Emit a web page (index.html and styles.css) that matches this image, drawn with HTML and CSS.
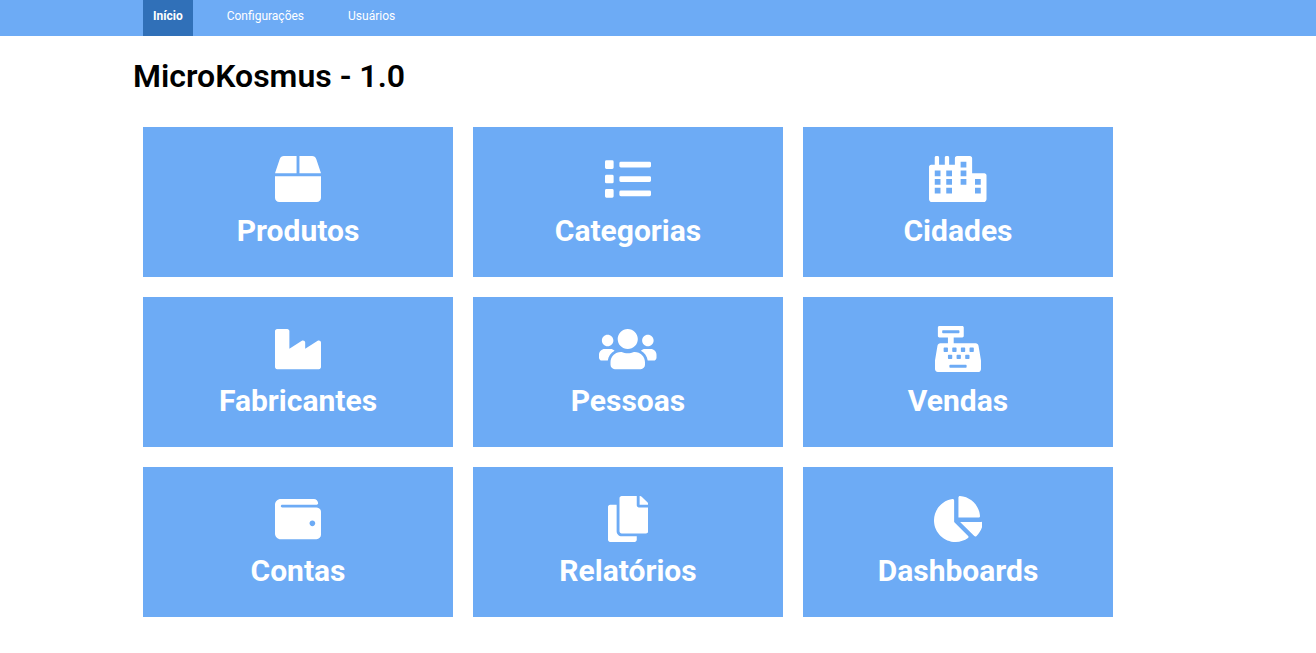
FILE: index.html
```html
<!DOCTYPE html>
<html lang="pt-BR">
<head>
<meta charset="utf-8">
<meta name="viewport" content="width=device-width, initial-scale=1">
<title>MicroKosmus</title>
<link rel="stylesheet" href="styles.css">
</head>
<body>
<nav class="nav">
  <a class="nav-link active" href="#inicio" aria-current="page">Início</a>
  <a class="nav-link" href="#configuracoes">Configurações</a>
  <a class="nav-link" href="#usuarios">Usuários</a>
</nav>
<main class="content">
  <h1 class="title">MicroKosmus - 1.0</h1>
  <div class="cards">
    <a class="card" href="#produtos">
      <svg class="icon" viewBox="0 0 512 512" aria-hidden="true"><path d="M509.5 184.6L458.9 32.8C452.4 13.2 434.1 0 413.4 0H272v192h238.7c-.4-2.5-.4-5-1.2-7.4zM240 0H98.600c-20.7 0-39 13.2-45.5 32.800L2.500 184.600c-.8 2.400-.8 4.900-1.200 7.400H240V0zM0 224v240c0 26.500 21.500 48 48 48h416c26.500 0 48-21.500 48-48V224H0z"/></svg>
      <span class="label">Produtos</span>
    </a>
    <a class="card" href="#categorias">
      <svg class="icon" viewBox="0 0 512 512" aria-hidden="true"><path d="M80 368H16a16 16 0 0 0-16 16v64a16 16 0 0 0 16 16h64a16 16 0 0 0 16-16v-64a16 16 0 0 0-16-16zm0-320H16A16 16 0 0 0 0 64v64a16 16 0 0 0 16 16h64a16 16 0 0 0 16-16V64a16 16 0 0 0-16-16zm0 160H16a16 16 0 0 0-16 16v64a16 16 0 0 0 16 16h64a16 16 0 0 0 16-16v-64a16 16 0 0 0-16-16zm416 176H176a16 16 0 0 0-16 16v32a16 16 0 0 0 16 16h320a16 16 0 0 0 16-16v-32a16 16 0 0 0-16-16zm0-320H176a16 16 0 0 0-16 16v32a16 16 0 0 0 16 16h320a16 16 0 0 0 16-16V80a16 16 0 0 0-16-16zm0 160H176a16 16 0 0 0-16 16v32a16 16 0 0 0 16 16h320a16 16 0 0 0 16-16v-32a16 16 0 0 0-16-16z"/></svg>
      <span class="label">Categorias</span>
    </a>
    <a class="card" href="#cidades">
      <svg class="icon" viewBox="0 0 640 512" aria-hidden="true"><path fill-rule="evenodd" d="M616 192H480V24c0-13.260-10.740-24-24-24H312c-13.260 0-24 10.740-24 24v72h-64V16c0-8.840-7.160-16-16-16h-16c-8.840 0-16 7.160-16 16v80h-64V16c0-8.840-7.160-16-16-16H80c-8.840 0-16 7.160-16 16v80H24c-13.260 0-24 10.740-24 24v360c0 17.670 14.330 32 32 32h576c17.670 0 32-14.330 32-32V216c0-13.260-10.750-24-24-24zM64 160h64v64H64zm0 96h64v64H64zm0 96h64v64H64zm128-192h64v64h-64zm0 96h64v64h-64zm0 96h64v64h-64zM352 64h64v64h-64zm0 96h64v64h-64zm0 96h64v64h-64zm160 0h64v64h-64zm0 96h64v64h-64z"/></svg>
      <span class="label">Cidades</span>
    </a>
    <a class="card" href="#fabricantes">
      <svg class="icon" viewBox="0 0 512 512" aria-hidden="true"><path d="M475.115 163.781L336 252.309v-68.280c0-18.916-20.931-30.399-36.885-20.248L160 252.309V56c0-13.255-10.745-24-24-24H24C10.745 32 0 42.745 0 56v400c0 13.255 10.745 24 24 24h464c13.255 0 24-10.745 24-24V184.029c0-18.917-20.931-30.399-36.885-20.248z"/></svg>
      <span class="label">Fabricantes</span>
    </a>
    <a class="card" href="#pessoas">
      <svg class="icon" viewBox="0 0 640 512" aria-hidden="true"><path d="M96 224c35.3 0 64-28.7 64-64s-28.7-64-64-64-64 28.7-64 64 28.7 64 64 64zm448 0c35.3 0 64-28.7 64-64s-28.7-64-64-64-64 28.7-64 64 28.7 64 64 64zm32 32h-64c-17.6 0-33.5 7.1-45.1 18.6 40.3 22.1 68.9 62 75.1 109.4h66c17.7 0 32-14.3 32-32v-32c0-35.3-28.7-64-64-64zm-256 0c61.9 0 112-50.1 112-112S381.9 32 320 32 208 82.1 208 144s50.1 112 112 112zm76.8 32h-8.3c-20.8 10-43.9 16-68.5 16s-47.6-6-68.5-16h-8.3C179.6 288 128 339.6 128 403.2V432c0 26.5 21.5 48 48 48h288c26.5 0 48-21.5 48-48v-28.8c0-63.6-51.6-115.2-115.2-115.2zm-223.7-13.4C161.5 263.1 145.6 256 128 256H64c-35.3 0-64 28.7-64 64v32c0 17.7 14.3 32 32 32h65.9c6.3-47.4 34.9-87.3 75.2-109.4z"/></svg>
      <span class="label">Pessoas</span>
    </a>
    <a class="card" href="#vendas">
      <svg class="icon" viewBox="0 0 512 512" aria-hidden="true"><path fill-rule="evenodd" d="M511.1 378.8l-26.700-160c-2.600-15.400-15.900-26.700-31.600-26.700H208v-64h96c8.800 0 16-7.200 16-16V16c0-8.800-7.200-16-16-16H48c-8.800 0-16 7.200-16 16v96c0 8.800 7.200 16 16 16h96v64H59.100c-15.600 0-29 11.300-31.600 26.700L.8 378.700c-.6 3.500-.9 7-.9 10.500V480c0 17.700 14.300 32 32 32h448c17.700 0 32-14.300 32-32v-90.700c.1-3.500-.2-7-.8-10.500zM88 48h176q8 0 8 8v16q0 8-8 8H88q-8 0-8-8V56q0-8 8-8zM104 240h32q8 0 8 8v32q0 8-8 8h-32q-8 0-8-8v-32q0-8 8-8zm96 0h32q8 0 8 8v32q0 8-8 8h-32q-8 0-8-8v-32q0-8 8-8zm96 0h32q8 0 8 8v32q0 8-8 8h-32q-8 0-8-8v-32q0-8 8-8zm96 0h32q8 0 8 8v32q0 8-8 8h-32q-8 0-8-8v-32q0-8 8-8zM152 320h32q8 0 8 8v32q0 8-8 8h-32q-8 0-8-8v-32q0-8 8-8zm96 0h32q8 0 8 8v32q0 8-8 8h-32q-8 0-8-8v-32q0-8 8-8zm96 0h32q8 0 8 8v32q0 8-8 8h-32q-8 0-8-8v-32q0-8 8-8zM168 432h176q8 0 8 8v16q0 8-8 8H168q-8 0-8-8v-16q0-8 8-8z"/></svg>
      <span class="label">Vendas</span>
    </a>
    <a class="card" href="#contas">
      <svg class="icon" viewBox="0 0 512 512" aria-hidden="true"><path d="M461.2 128H80c-8.840 0-16-7.160-16-16s7.160-16 16-16h384c8.840 0 16-7.160 16-16 0-26.510-21.490-48-48-48H64C28.650 32 0 60.650 0 96v320c0 35.350 28.650 64 64 64h397.200c28.020 0 50.800-21.530 50.800-48V176c0-26.470-22.780-48-50.800-48zM416 336c-17.670 0-32-14.330-32-32s14.330-32 32-32 32 14.330 32 32-14.330 32-32 32z"/></svg>
      <span class="label">Contas</span>
    </a>
    <a class="card" href="#relatorios">
      <svg class="icon" viewBox="0 0 448 512" aria-hidden="true"><path d="M320 448v40c0 13.255-10.745 24-24 24H24c-13.255 0-24-10.745-24-24V120c0-13.255 10.745-24 24-24h72v296c0 30.879 25.121 56 56 56h168zm0-344V0H152c-13.255 0-24 10.745-24 24v368c0 13.255 10.745 24 24 24h272c13.255 0 24-10.745 24-24V128H344c-13.200 0-24-10.800-24-24zm120.971-31.029L375.029 7.029A24 24 0 0 0 358.059 0H352v96h96v-6.059a24 24 0 0 0-7.029-16.970z"/></svg>
      <span class="label">Relatórios</span>
    </a>
    <a class="card" href="#dashboards">
      <svg class="icon" viewBox="0 0 544 512" aria-hidden="true"><path d="M527.790 288H290.500l158.030 158.030c6.040 6.040 15.980 6.530 22.190.68 38.700-36.460 65.320-85.610 73.130-140.860 1.340-9.460-6.510-17.850-16.060-17.850zm-15.830-64.800C503.720 103.740 408.260 8.280 288.800.04 279.680-.59 272 7.100 272 16.240V240h223.770c9.140 0 16.820-7.680 16.190-16.800zM224 288V50.710c0-9.550-8.390-17.400-17.840-16.060C86.990 51.490-4.100 155.600.14 280.370 4.500 408.510 114.830 513.590 243.030 511.980c50.400-.63 96.970-16.870 135.260-44.030 7.900-5.600 8.420-17.230 1.570-24.080L224 288z"/></svg>
      <span class="label">Dashboards</span>
    </a>
  </div>
</main>
</body>
</html>
```
FILE: styles.css
```css
:root {
  --gutter: round(up, 10vw, 1px);
}

* {
  box-sizing: border-box;
}

body {
  margin: 0;
  background: #fff;
  color: #000;
  font-family: Roboto, "Liberation Sans", sans-serif;
}

.nav {
  display: flex;
  gap: 24px;
  padding: 0 calc(var(--gutter) + 11px);
  background: #6dabf5;
}

.nav-link {
  padding: 8px 10px 12px;
  color: #fff;
  font-size: 12px;
  line-height: 16px;
  text-decoration: none;
}

.nav-link.active {
  background: #3070b8;
  font-weight: 700;
}

.content {
  padding: 20px var(--gutter);
}

.title {
  margin: 0;
  padding: 0 1px;
  font-size: 32px;
  font-weight: 600;
  line-height: 40px;
}

.cards {
  display: flex;
  flex-wrap: wrap;
  gap: 20px;
  padding: 31px 11px 0;
}

.card {
  display: flex;
  flex-direction: column;
  align-items: center;
  gap: 11px;
  width: 310px;
  padding: 29px 10px 28px;
  background: #6dabf5;
  color: #fff;
  text-decoration: none;
}

.icon {
  height: 46px;
  fill: currentColor;
}

.label {
  font-size: 30px;
  font-weight: 700;
  line-height: 36px;
}
```
